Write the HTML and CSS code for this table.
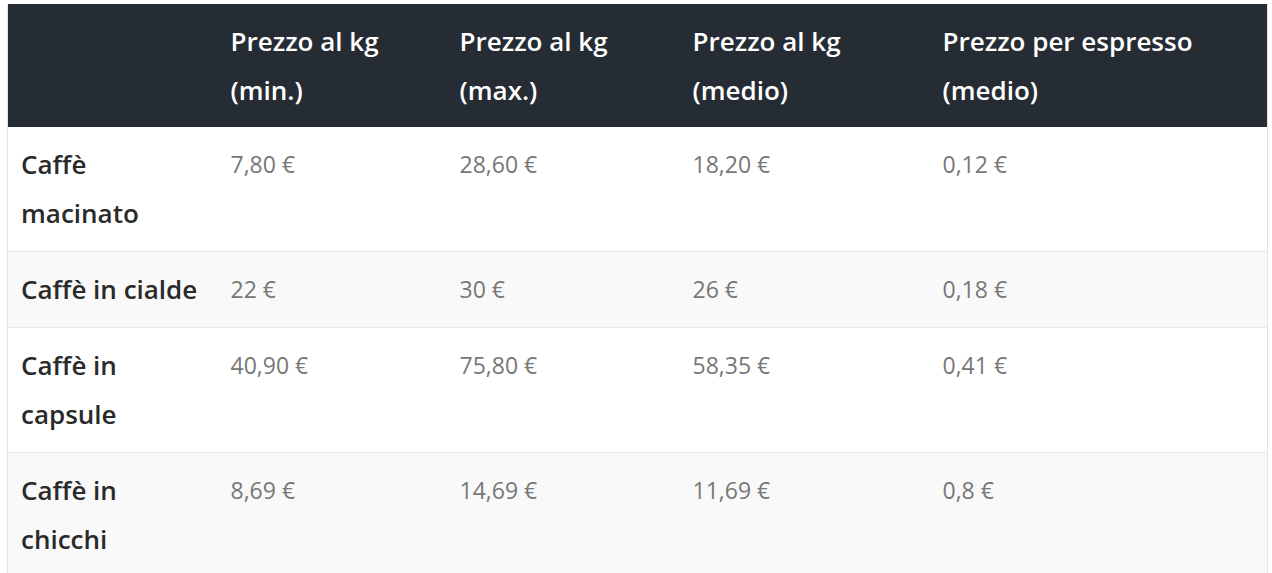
FILE: index.html
```html
<!DOCTYPE html>
<html lang="it">
<head>
<meta charset="utf-8">
<link rel="stylesheet" href="styles.css">
</head>
<body>
<div class="wrap">
<table class="price-table">
  <colgroup>
    <col class="c1"><col class="c2"><col class="c3"><col class="c4"><col class="c5">
  </colgroup>
  <thead>
    <tr>
      <th></th>
      <th>Prezzo al kg (min.)</th>
      <th>Prezzo al kg (max.)</th>
      <th>Prezzo al kg (medio)</th>
      <th>Prezzo per espresso (medio)</th>
    </tr>
  </thead>
  <tbody>
    <tr>
      <td class="name">Caffè macinato</td>
      <td>7,80 €</td><td>28,60 €</td><td>18,20 €</td><td>0,12 €</td>
    </tr>
    <tr class="alt">
      <td class="name">Caffè in cialde</td>
      <td>22 €</td><td>30 €</td><td>26 €</td><td>0,18 €</td>
    </tr>
    <tr>
      <td class="name">Caffè in capsule</td>
      <td>40,90 €</td><td>75,80 €</td><td>58,35 €</td><td>0,41 €</td>
    </tr>
    <tr class="alt">
      <td class="name">Caffè in chicchi</td>
      <td>8,69 €</td><td>14,69 €</td><td>11,69 €</td><td>0,8 €</td>
    </tr>
  </tbody>
</table>
</div>
</body>
</html>
```

FILE: styles.css
```css
html, body {
  margin: 0;
  padding: 0;
  background: #ffffff;
}
.wrap {
  padding: 4px 5px 0 7px;
}
.price-table {
  width: 1260px;
  border-collapse: collapse;
  table-layout: fixed;
  font-family: "Open Sans", "Liberation Sans", sans-serif;
  font-size: 23px;
  line-height: 49px;
  border-left: 1px solid #e4e4e4;
  border-right: 1px solid #e4e4e4;
}
.c1 { width: 210px; }
.c2 { width: 229px; }
.c3 { width: 233px; }
.c4 { width: 250px; }
.c5 { width: 338px; }
.price-table thead th {
  background: #262c34;
  color: #ffffff;
  font-size: 26px;
  font-weight: 600;
  text-align: left;
  vertical-align: top;
  padding: 13px 13px 12px 13px;
}
.price-table td {
  color: #777777;
  font-weight: 400;
  vertical-align: top;
  padding: 13px 13px 13px 13px;
  border-bottom: 1px solid #e8e8e8;
}
.price-table td.name {
  color: #2a2a2a;
  font-size: 26px;
  font-weight: 600;
}
.price-table tr.alt td {
  background: #f9f9f9;
}
```
